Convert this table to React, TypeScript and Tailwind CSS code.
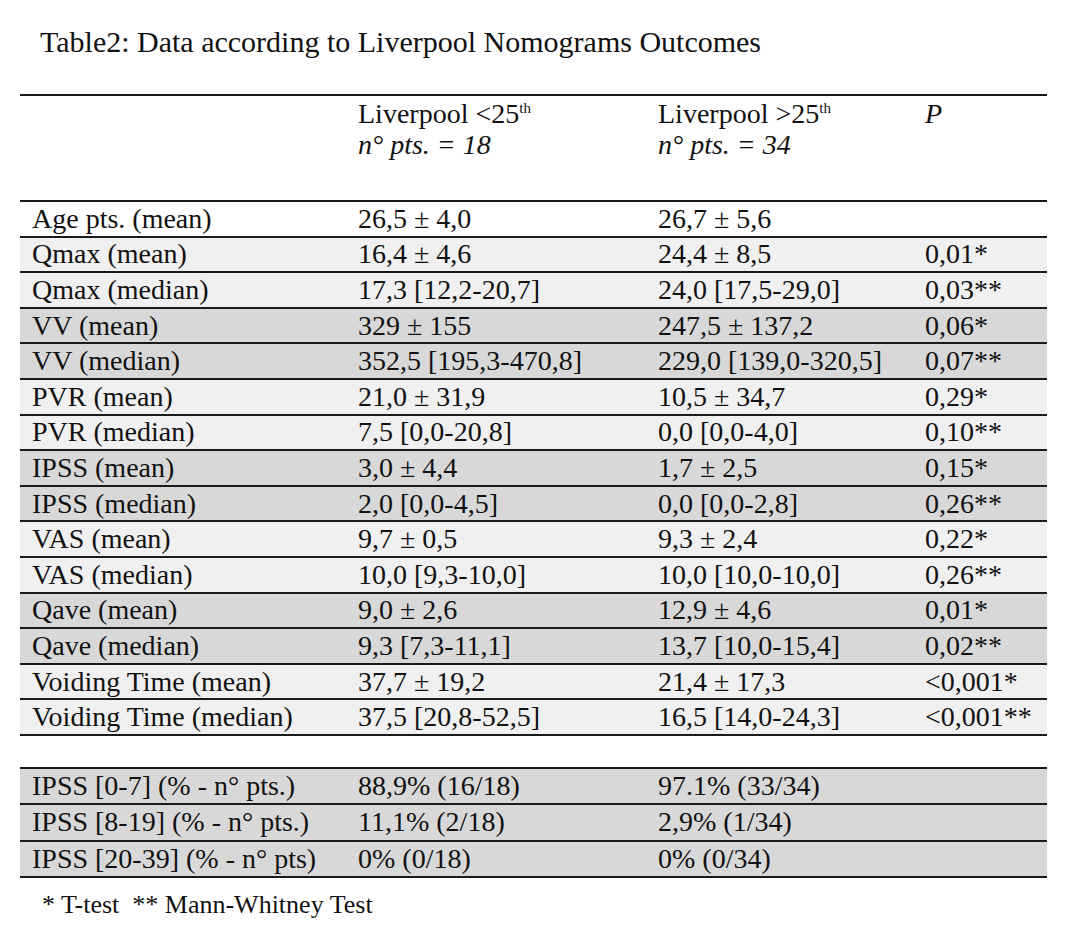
const light = "bg-[#f0f0f0]";
const dark = "bg-[#d8d8d8]";

type Row = { label: string; a: string; b: string; p?: string; tone: "white" | "light" | "dark" };

const rows: Row[] = [
  { label: "Age pts. (mean)", a: "26,5 ± 4,0", b: "26,7 ± 5,6", tone: "white" },
  { label: "Qmax (mean)", a: "16,4 ± 4,6", b: "24,4 ± 8,5", p: "0,01*", tone: "light" },
  { label: "Qmax (median)", a: "17,3 [12,2-20,7]", b: "24,0 [17,5-29,0]", p: "0,03**", tone: "light" },
  { label: "VV (mean)", a: "329 ± 155", b: "247,5 ± 137,2", p: "0,06*", tone: "dark" },
  { label: "VV (median)", a: "352,5 [195,3-470,8]", b: "229,0 [139,0-320,5]", p: "0,07**", tone: "dark" },
  { label: "PVR (mean)", a: "21,0 ± 31,9", b: "10,5 ± 34,7", p: "0,29*", tone: "light" },
  { label: "PVR (median)", a: "7,5 [0,0-20,8]", b: "0,0 [0,0-4,0]", p: "0,10**", tone: "light" },
  { label: "IPSS (mean)", a: "3,0 ± 4,4", b: "1,7 ± 2,5", p: "0,15*", tone: "dark" },
  { label: "IPSS (median)", a: "2,0 [0,0-4,5]", b: "0,0 [0,0-2,8]", p: "0,26**", tone: "dark" },
  { label: "VAS (mean)", a: "9,7 ± 0,5", b: "9,3 ± 2,4", p: "0,22*", tone: "light" },
  { label: "VAS (median)", a: "10,0 [9,3-10,0]", b: "10,0 [10,0-10,0]", p: "0,26**", tone: "light" },
  { label: "Qave (mean)", a: "9,0 ± 2,6", b: "12,9 ± 4,6", p: "0,01*", tone: "dark" },
  { label: "Qave (median)", a: "9,3 [7,3-11,1]", b: "13,7 [10,0-15,4]", p: "0,02**", tone: "dark" },
  { label: "Voiding Time (mean)", a: "37,7 ± 19,2", b: "21,4 ± 17,3", p: "<0,001*", tone: "light" },
  { label: "Voiding Time (median)", a: "37,5 [20,8-52,5]", b: "16,5 [14,0-24,3]", p: "<0,001**", tone: "light" },
];

const ipss: Row[] = [
  { label: "IPSS [0-7] (% - n° pts.)", a: "88,9% (16/18)", b: "97.1% (33/34)", tone: "dark" },
  { label: "IPSS [8-19] (% - n° pts.)", a: "11,1% (2/18)", b: "2,9% (1/34)", tone: "dark" },
  { label: "IPSS [20-39] (% - n° pts)", a: "0% (0/18)", b: "0% (0/34)", tone: "dark" },
];

const cols = "grid grid-cols-[326px_300px_267px_134px]";

function DataRow({ row, tall }: { row: Row; tall?: boolean }) {
  const bg = row.tone === "dark" ? dark : row.tone === "light" ? light : "bg-white";
  return (
    <div
      className={`${cols} ${bg} ${tall ? "h-[36.3px]" : "h-[35.6px]"} items-center border-b-2 border-[#1a1a1a] text-[28px] leading-none`}
    >
      <div className="pl-3 whitespace-nowrap">{row.label}</div>
      <div className="pl-3 whitespace-nowrap">{row.a}</div>
      <div className="pl-3 whitespace-nowrap">{row.b}</div>
      <div className="pl-3 whitespace-nowrap">{row.p}</div>
    </div>
  );
}

function GroupHead({ cmp, n }: { cmp: string; n: string }) {
  return (
    <div className="pl-3 pt-[2px]">
      <div className="text-[28px] leading-[31px] whitespace-nowrap">
        Liverpool {cmp}25<sup className="text-[15px] -top-[10px]">th</sup>
      </div>
      <div className="text-[28px] leading-[31px] italic whitespace-nowrap">n° pts. = {n}</div>
    </div>
  );
}

export default function App() {
  return (
    <div className="h-[932px] w-[1080px] bg-white text-[#111] font-['Liberation_Serif','Times_New_Roman',serif]">
      <h1 className="pl-10 pt-[24px] text-[30px] leading-[36px]">
        Table2: Data according to Liverpool Nomograms Outcomes
      </h1>

      <div className="ml-5 mt-[34px] w-[1027px]">
        <div className={`${cols} h-[108px] border-y-2 border-[#1a1a1a]`}>
          <div />
          <GroupHead cmp="<" n="18" />
          <GroupHead cmp=">" n="34" />
          <div className="pl-3 pt-[2px] text-[28px] leading-[31px] italic">P</div>
        </div>

        {rows.map((r) => (
          <DataRow key={r.label} row={r} />
        ))}

        <div className="h-[33px] border-b-2 border-[#1a1a1a]" />

        {ipss.map((r) => (
          <DataRow key={r.label} row={r} tall />
        ))}

        <p className="pl-[22px] pt-[12px] text-[26px] leading-[30px] whitespace-pre">
          {"* T-test  ** Mann-Whitney Test"}
        </p>
      </div>
    </div>
  );
}
